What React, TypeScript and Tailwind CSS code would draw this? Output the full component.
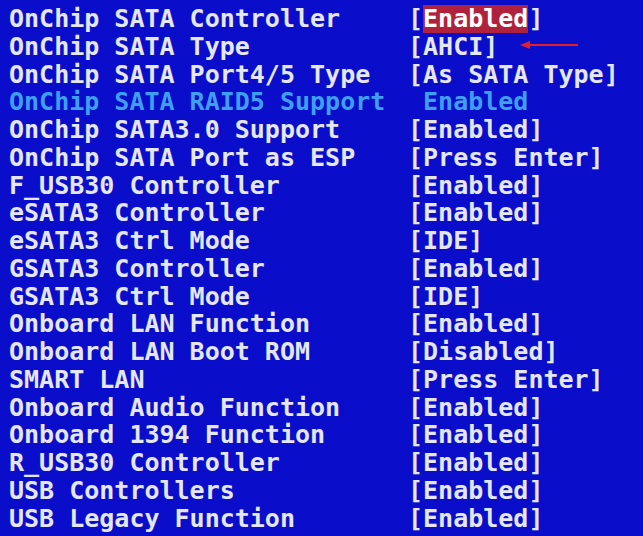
const rows: { label: string; value: string; dim?: boolean; selected?: boolean; arrow?: boolean }[] = [
  { label: "OnChip SATA Controller", value: "Enabled", selected: true },
  { label: "OnChip SATA Type", value: "[AHCI]", arrow: true },
  { label: "OnChip SATA Port4/5 Type", value: "[As SATA Type]" },
  { label: "OnChip SATA RAID5 Support", value: " Enabled", dim: true },
  { label: "OnChip SATA3.0 Support", value: "[Enabled]" },
  { label: "OnChip SATA Port as ESP", value: "[Press Enter]" },
  { label: "F_USB30 Controller", value: "[Enabled]" },
  { label: "eSATA3 Controller", value: "[Enabled]" },
  { label: "eSATA3 Ctrl Mode", value: "[IDE]" },
  { label: "GSATA3 Controller", value: "[Enabled]" },
  { label: "GSATA3 Ctrl Mode", value: "[IDE]" },
  { label: "Onboard LAN Function", value: "[Enabled]" },
  { label: "Onboard LAN Boot ROM", value: "[Disabled]" },
  { label: "SMART LAN", value: "[Press Enter]" },
  { label: "Onboard Audio Function", value: "[Enabled]" },
  { label: "Onboard 1394 Function", value: "[Enabled]" },
  { label: "R_USB30 Controller", value: "[Enabled]" },
  { label: "USB Controllers", value: "[Enabled]" },
  { label: "USB Legacy Function", value: "[Enabled]" },
];

export default function App() {
  return (
    <div className="w-[643px] h-[536px] overflow-hidden bg-[#0a0ecb] pl-[9px] pt-[5px] font-['DejaVu_Sans_Mono',monospace] font-bold text-[25px] text-[#e4e6f2] whitespace-pre">
      {rows.map((row) => (
        <div key={row.label} className="flex h-[27.75px] leading-[27.75px]">
          <div className={`w-[399px] ${row.dim ? "text-[#3f9ff2]" : ""}`}>{row.label}</div>
          <div className={`flex items-center ${row.dim ? "text-[#3f9ff2]" : ""}`}>
            {row.selected ? (
              <>
                <span>[</span>
                <span className="bg-[#b0213d] text-white">{row.value}</span>
                <span>]</span>
              </>
            ) : (
              <span>{row.value}</span>
            )}
            {row.arrow && (
              <svg className="ml-[22px] -mt-[4px]" width="58" height="10" viewBox="0 0 58 10">
                <line x1="6" y1="5" x2="58" y2="5" stroke="#e0202a" strokeWidth="2" />
                <polygon points="0,5 10,1 10,9" fill="#e0202a" />
              </svg>
            )}
          </div>
        </div>
      ))}
    </div>
  );
}
